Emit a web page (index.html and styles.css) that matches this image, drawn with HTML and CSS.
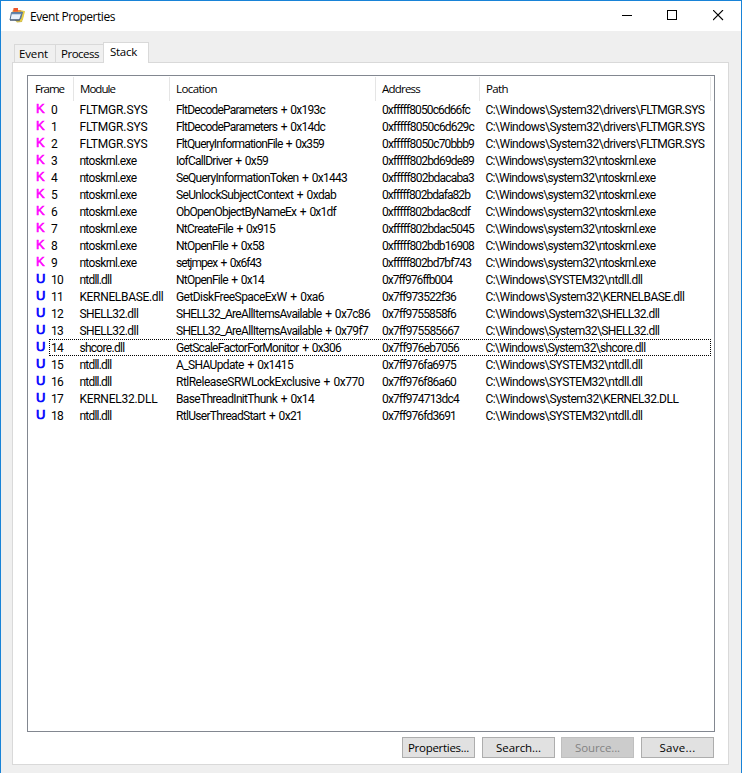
FILE: index.html
```html
<!DOCTYPE html>
<html lang="en">
<head>
<meta charset="utf-8">
<title>Event Properties</title>
<link rel="stylesheet" href="styles.css">
</head>
<body>
<div class="window">
  <header class="titlebar">
    <svg class="app-icon" width="17" height="15" viewBox="0 0 17 15">
      <path d="M4 1.500 L15.500 3 L13 14 L8 14.500 L3 9z" fill="#c9b85a"/>
      <path d="M4 2h8l-1 4H3z" fill="#e79a45"/>
      <rect x="4.500" y="0" width="4.500" height="3.500" fill="#f0562b"/>
      <path d="M12 2.500l4 .8-2 8-2 2.500-2-1z" fill="#e6cd46"/>
      <path d="M11.500 3.500l2.500.5-2 7-1.500.5z" fill="#55779e"/>
      <path d="M2.500 4.500h10.500l-2.500 7.500h-9.500z" fill="#e9f1fa" stroke="#56708f"/>
      <path d="M2.500 4.500h10.500l-.6 1.800h-10.400z" fill="#6487ad"/>
      <path d="M1 12h10" stroke="#3d4d62"/>
    </svg>
    <span class="title" data-w="85">Event Properties</span>
    <div class="controls">
      <svg width="12" height="12"><path d="M1 5.500h10" stroke="#000"/></svg>
      <svg width="12" height="12"><rect x=".5" y=".5" width="9" height="9" fill="none" stroke="#000"/></svg>
      <svg width="12" height="12"><path d="M0 0l10 10M10 0l-10 10" stroke="#000" stroke-width="1.100"/></svg>
    </div>
  </header>
  <main class="body">
    <nav class="tabs">
      <div class="tab event"><span data-w="29">Event</span></div>
      <div class="tab process"><span data-w="38">Process</span></div>
      <div class="tab active"><span data-w="27">Stack</span></div>
    </nav>
    <section class="panel">
      <div class="list">
        <div class="head">
          <div><span data-w="29">Frame</span></div>
          <div><span data-w="35">Module</span></div>
          <div><span data-w="41">Location</span></div>
          <div><span data-w="38">Address</span></div>
          <div><span data-w="22">Path</span></div>
        </div>
        <div id="rows"></div>
      </div>
      <div class="buttons">
        <button><span data-w="61">Properties...</span></button>
        <button><span data-w="45">Search...</span></button>
        <button disabled><span data-w="45">Source...</span></button>
        <button><span data-w="36">Save...</span></button>
      </div>
    </section>
  </main>
</div>
<script src="stack.js"></script>
</body>
</html>
```
FILE: styles.css
```css
* { box-sizing: border-box; }
body { margin: 0; font: 12px/17px "Open Sans", sans-serif; color: #000; }
.window { width: 742px; height: 773px; overflow: hidden; background: #efefef; border: solid #1883d7; border-width: 1px 1px 0; display: flex; flex-direction: column; }
.titlebar { height: 30px; flex: none; background: #fff; display: flex; align-items: center; padding-left: 8px; }
.app-icon { margin: -1px 4px 0 0; }
.title { white-space: nowrap; }
.controls { margin-left: auto; display: flex; gap: 34px; padding-right: 16px; height: 12px; }
.body { padding: 11px 12px 0 11px; }
.tabs { display: flex; align-items: flex-end; height: 20px; padding-left: 2px; font-size: 11.5px; }
.tab { height: 18px; border: 1px solid #d9d9d9; border-width: 1px 0 0 1px; background: #f0f0f0; padding: 0 0 0 4px; white-space: nowrap; }
.event { width: 41px; }
.process { width: 48px; padding-left: 5px; }
.active { position: relative; width: 46px; height: 21px; margin-bottom: -1px; border-right-width: 1px; background: #fff; padding-left: 6px; }
.panel { width: 717px; height: 703px; background: #fff; border: 1px solid #d9d9d9; padding: 12px 13px 0 14px; }
.list { width: 688px; height: 657px; border: 1px solid #828790; padding-top: 1px; }
.head, .row { display: grid; grid-template-columns: 46px 96px 206px 104px 231px; white-space: nowrap; }
.head { height: 24px; font-size: 11.5px; line-height: 23px; }
.head > div { border-right: 1px solid #e5e5e5; padding-left: 6px; }
.head > div:first-child { padding-left: 7px; }
.row { height: 17px; font-family: Roboto, "Liberation Sans", sans-serif; word-spacing: 1.3px; }
.row > div { padding-left: 6px; line-height: 18px; }
.row > div:nth-child(2), .row > div:nth-child(5) { padding-left: 5.400px; }
.row > .frame { padding-left: 8px; display: flex; }
.mark { width: 15px; font: 13px/16px "Liberation Sans", sans-serif; }
.kernel { color: #f0f; -webkit-text-stroke: .6px #f0f; }
.user { color: #00f; -webkit-text-stroke: .7px #00f; }
.row.focused { position: relative; }
.row.focused::after { content: ""; position: absolute; left: 21px; right: 3px; top: 0; bottom: 0; border: 1px dotted #000; }
.buttons { display: flex; justify-content: flex-end; gap: 7px; padding: 5px 1px 0 0; }
button { width: 73px; height: 21px; padding: 0; border: 1px solid #adadad; background: #e1e1e1; color: #000; font: 11.5px/19px "Open Sans", sans-serif; white-space: nowrap; }
button:nth-child(2) { margin-right: -1px; }
button:disabled { background: #ccc; border-color: #bfbfbf; color: #838383; }
```
FILE: stack.js
```js
// Each frame: module, location, address, path, and the text width of each.
const drv = "C:\\Windows\\System32\\drivers\\FLTMGR.SYS";
const nt = "C:\\Windows\\system32\\ntoskrnl.exe";
const dll = "C:\\Windows\\SYSTEM32\\ntdll.dll";
const shell = "C:\\Windows\\System32\\SHELL32.dll";
const frames = [
  ["FLTMGR.SYS", "FltDecodeParameters + 0x193c", "0xfffff8050c6d66fc", drv, 68, 149, 88, 219],
  ["FLTMGR.SYS", "FltDecodeParameters + 0x14dc", "0xfffff8050c6d629c", drv, 68, 149, 92, 219],
  ["FLTMGR.SYS", "FltQueryInformationFile + 0x359", "0xfffff8050c70bbb9", drv, 68, 148, 92, 219],
  ["ntoskrnl.exe", "IofCallDriver + 0x59", "0xfffff802bd69de89", nt, 57, 92, 92, 170],
  ["ntoskrnl.exe", "SeQueryInformationToken + 0x1443", "0xfffff802bdacaba3", nt, 57, 171, 92, 170],
  ["ntoskrnl.exe", "SeUnlockSubjectContext + 0xdab", "0xfffff802bdafa82b", nt, 57, 160, 88, 170],
  ["ntoskrnl.exe", "ObOpenObjectByNameEx + 0x1df", "0xfffff802bdac8cdf", nt, 57, 160, 88, 170],
  ["ntoskrnl.exe", "NtCreateFile + 0x915", "0xfffff802bdac5045", nt, 57, 99, 92, 170],
  ["ntoskrnl.exe", "NtOpenFile + 0x58", "0xfffff802bdb16908", nt, 57, 88, 92, 170],
  ["ntoskrnl.exe", "setjmpex + 0x6f43", "0xfffff802bd7bf743", nt, 57, 85, 89, 170],
  ["ntdll.dll", "NtOpenFile + 0x14", "0x7ff976ffb004", dll, 32, 88, 70, 157],
  ["KERNELBASE.dll", "GetDiskFreeSpaceExW + 0xa6", "0x7ff973522f36", "C:\\Windows\\System32\\KERNELBASE.dll", 84, 148, 74, 199],
  ["SHELL32.dll", "SHELL32_AreAllItemsAvailable + 0x7c86", "0x7ff9755858f6", shell, 59, 194, 74, 174],
  ["SHELL32.dll", "SHELL32_AreAllItemsAvailable + 0x79f7", "0x7ff975585667", shell, 59, 192, 77, 174],
  ["shcore.dll", "GetScaleFactorForMonitor + 0x306", "0x7ff976eb7056", "C:\\Windows\\System32\\shcore.dll", 45, 165, 77, 160],
  ["ntdll.dll", "A_SHAUpdate + 0x1415", "0x7ff976fa6975", dll, 32, 117, 74, 157],
  ["ntdll.dll", "RtlReleaseSRWLockExclusive + 0x770", "0x7ff976f86a60", dll, 32, 188, 74, 157],
  ["KERNEL32.DLL", "BaseThreadInitThunk + 0x14", "0x7ff974713dc4", "C:\\Windows\\System32\\KERNEL32.DLL", 78, 138, 77, 193],
  ["ntdll.dll", "RtlUserThreadStart + 0x21", "0x7ff976fd3691", dll, 32, 126, 74, 157]
];
const list = document.getElementById("rows");
frames.forEach((f, i) => {
  const row = document.createElement("div");
  row.className = "row" + (i === 14 ? " focused" : "");
  const kernel = i < 10;
  row.innerHTML = `<div class="frame"><span class="mark ${kernel ? "kernel" : "user"}">${kernel ? "K" : "U"}</span><span data-w="${i < 10 ? 6 : 12}">${i}</span></div>` +
    f.slice(0, 4).map((t, c) => `<div><span data-w="${f[4 + c]}">${t}</span></div>`).join("");
  list.append(row);
});
// Tighten or loosen each label to its column text width.
document.querySelectorAll("[data-w]").forEach(el => {
  const gap = (el.dataset.w - el.getBoundingClientRect().width) / el.textContent.length;
  el.style.letterSpacing = gap.toFixed(3) + "px";
});
```
